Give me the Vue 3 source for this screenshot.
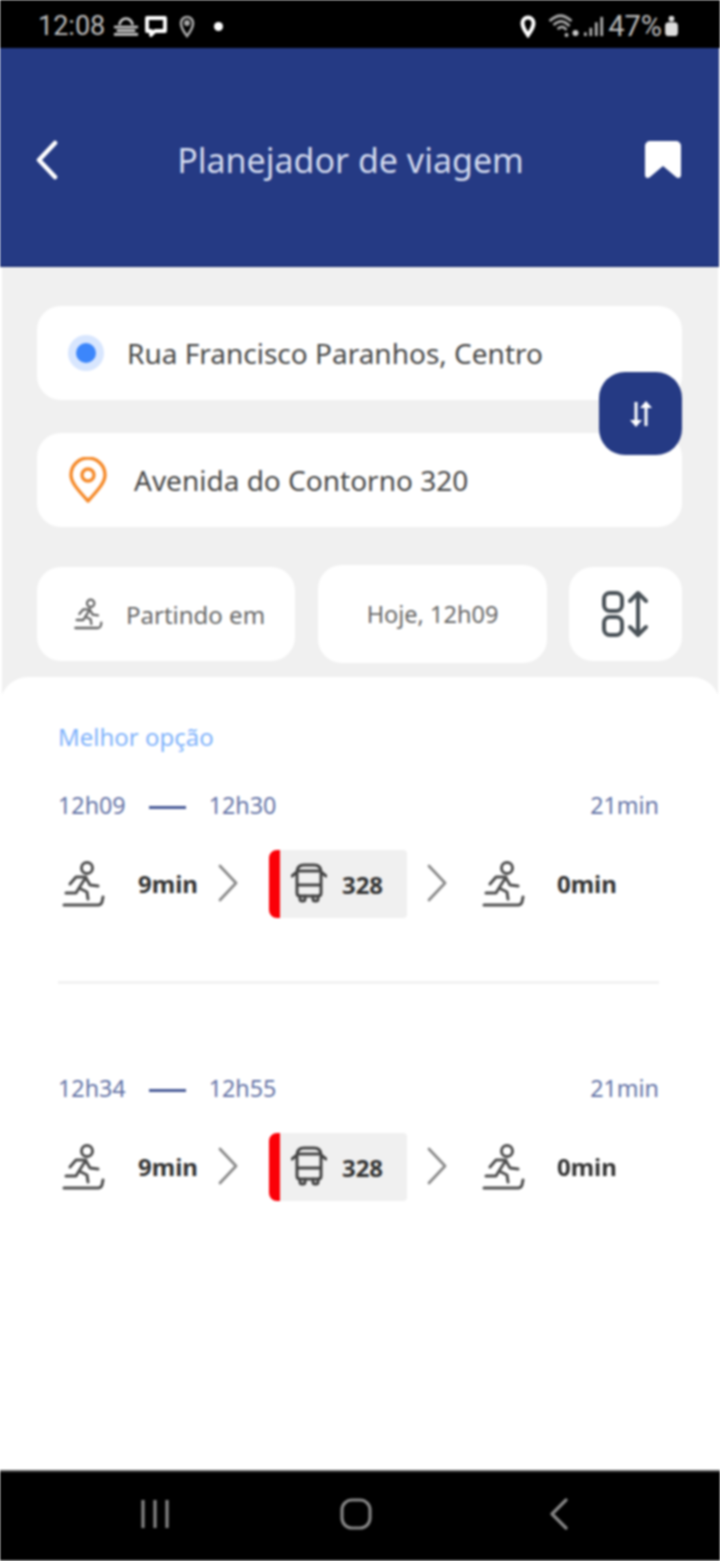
<template>
  <div class="app">
    <div class="status">
      <div class="status-side">
        <span class="clock">12:08</span>
        <svg class="st-weather" viewBox="0 0 28 20" fill="none" stroke="#c8c8c8" stroke-width="2.800">
          <path d="M7 9a7 7 0 0 1 14 0" /><path d="M1 11h26M4 15h20M1 19h26" />
        </svg>
        <svg class="st-chat" viewBox="0 0 24 22" fill="none" stroke="#fff" stroke-width="3.800" stroke-linejoin="round">
          <path d="M3 3h18v13H11l-4 4v-4H3z" />
        </svg>
        <svg class="st-pin" viewBox="0 0 16 24" fill="none" stroke="#aaa" stroke-width="2.600">
          <path d="M8 22C4 17 2 13 2 9a6 6 0 0 1 12 0c0 4-2 8-6 13z" /><circle cx="8" cy="9" r="1.600" />
        </svg>
        <span class="st-dot" />
      </div>
      <div class="status-side">
        <svg class="st-loc" viewBox="0 0 16 24" fill="none" stroke="#fff" stroke-width="4">
          <path d="M8 21C5 17 2.500 13 2.500 9a5.500 5.500 0 0 1 11 0c0 4-2.500 8-5.500 12z" />
        </svg>
        <svg class="st-wifi" viewBox="0 0 32 26" fill="none" stroke="#a8a8a8" stroke-width="2.800">
          <path d="M1 8c8-7 14-7 22 0M5 12c6-5 10-5 16 1M9 16c4-3 6-3 9 1" />
          <circle cx="18" cy="22" r="2" fill="#b8b8b8" stroke="none" /><circle cx="27" cy="20" r="3" fill="#c8c8c8" stroke="none" />
        </svg>
        <svg class="st-signal" viewBox="0 0 22 22" fill="#b0b0b0">
          <rect x="0" y="18" width="3" height="4" /><rect x="6" y="13" width="3" height="9" />
          <rect x="12" y="7" width="3" height="15" /><rect x="18" y="1" width="3" height="21" />
        </svg>
        <span class="battery-text">47%</span>
        <svg class="st-batt" viewBox="0 0 16 24" fill="#ddd">
          <rect x="5" y="1" width="6" height="6" rx="2" /><rect x="1" y="8" width="14" height="15" rx="4" />
        </svg>
      </div>
    </div>

    <header class="topbar">
      <svg class="back" viewBox="0 0 24 40" fill="none" stroke="#fff" stroke-width="4.500" stroke-linecap="round" stroke-linejoin="round">
        <path d="M20 3L4 20l16 17" />
      </svg>
      <h1 class="title">Planejador de viagem</h1>
      <svg class="bookmark" viewBox="0 0 36 38" fill="#fff">
        <path d="M5 0h26a5 5 0 0 1 5 5v29c0 3-3 4-5 2L18 25 5 36c-2 2-5 1-5-2V5a5 5 0 0 1 5-5z" />
      </svg>
    </header>

    <main class="panel">
      <div class="form">
        <div class="field">
          <span class="origin-dot" />
          <span class="field-text">Rua Francisco Paranhos, Centro</span>
        </div>
        <div class="field field-dest">
          <svg class="dest-pin" viewBox="0 0 38 46" fill="none" stroke="#f58a2a" stroke-width="3.400">
            <path d="M19 44C8 32 2 25 2 18a17 17 0 0 1 34 0c0 7-6 14-17 26z" stroke-linejoin="round" />
            <circle cx="19" cy="18" r="6" />
          </svg>
          <span class="field-text">Avenida do Contorno 320</span>
        </div>
        <button class="swap" type="button">
          <svg viewBox="0 0 26 28" width="26" height="28" fill="#fff" stroke="#fff" stroke-width="3">
            <path d="M8 2v20M18 26V6" />
            <path d="M2 20h12l-6 7zM12 8h12l-6-7z" stroke="none" />
          </svg>
        </button>
        <div class="options">
          <div class="opt opt-mode">
            <svg class="run run-small" viewBox="0 0 48 48" fill="none" stroke="#666" stroke-width="3.400" stroke-linecap="round" stroke-linejoin="round">
              <use href="#run-shape" />
            </svg>
            <span>Partindo em</span>
          </div>
          <div class="opt opt-time">Hoje, 12h09</div>
          <div class="opt opt-sort">
            <svg viewBox="0 0 48 48" width="48" height="48" fill="none" stroke="#4a5258" stroke-width="4" stroke-linecap="round" stroke-linejoin="round">
              <rect x="2" y="3" width="18" height="18" rx="6" />
              <rect x="2" y="27" width="18" height="18" rx="6" />
              <path d="M36 3v42M28 11l8-8 8 8M28 37l8 8 8-8" />
            </svg>
          </div>
        </div>
      </div>

      <section class="sheet">
        <svg class="defs" width="0" height="0">
          <defs>
            <g id="run-shape">
              <circle cx="25" cy="8" r="5.500" />
              <path d="M24 17L17 28l8 4 1 7M24 17H14l-6 7M24 18l4 7 8 1M17 28l-3 5H4" />
              <path d="M2 45h34q3 0 4-3l1-5" />
            </g>
          </defs>
        </svg>
        <p class="best">Melhor opção</p>
        <template v-for="(trip, i) in trips" :key="trip.start">
          <div class="trip">
            <div class="times">
              <span>{{ trip.start }}</span>
              <i class="dash" />
              <span>{{ trip.end }}</span>
              <span class="total">21min</span>
            </div>
            <div class="legs">
              <svg class="run" viewBox="0 0 48 48" fill="none" stroke="#505050" stroke-width="3" stroke-linecap="round" stroke-linejoin="round">
                <use href="#run-shape" />
              </svg>
              <b class="walk-time">9min</b>
              <svg class="chev chev-a" viewBox="0 0 20 38" fill="none" stroke="#8a8a8a" stroke-width="2.800" stroke-linecap="round" stroke-linejoin="round">
                <path d="M2 2l16 17L2 36" />
              </svg>
              <div class="line-tag">
                <svg class="bus" viewBox="0 0 36 40" fill="none" stroke="#444" stroke-width="3" stroke-linecap="round" stroke-linejoin="round">
                  <path d="M6 30V9q0-7 7-7h10q7 0 7 7v21q0 3-3 3H9q-3 0-3-3zM6 8h24M6 22h24M1 13l5-4M35 13l-5-4" />
                  <path d="M9 33v3q0 2 2 2h1q2 0 2-2v-3M22 33v3q0 2 2 2h1q2 0 2-2v-3" />
                </svg>
                <b>328</b>
              </div>
              <svg class="chev chev-b" viewBox="0 0 20 38" fill="none" stroke="#8a8a8a" stroke-width="2.800" stroke-linecap="round" stroke-linejoin="round">
                <path d="M2 2l16 17L2 36" />
              </svg>
              <svg class="run run-end" viewBox="0 0 48 48" fill="none" stroke="#505050" stroke-width="3" stroke-linecap="round" stroke-linejoin="round">
                <use href="#run-shape" />
              </svg>
              <b class="walk-time walk-end">0min</b>
            </div>
          </div>
          <hr v-if="i === 0" class="sep" />
        </template>
      </section>
    </main>

    <nav class="navbar">
      <svg viewBox="0 0 30 30" width="30" height="30" fill="none" stroke="#858585" stroke-width="3.200">
        <path d="M3 1v28M15 1v28M27 1v28" />
      </svg>
      <svg class="nav-home" viewBox="0 0 32 32" width="32" height="32" fill="none" stroke="#858585" stroke-width="3.200">
        <rect x="2" y="2" width="28" height="28" rx="10" />
      </svg>
      <svg class="nav-back" viewBox="0 0 20 32" width="20" height="32" fill="none" stroke="#858585" stroke-width="3.200" stroke-linecap="round" stroke-linejoin="round">
        <path d="M17 2L3 16l14 14" />
      </svg>
    </nav>
  </div>
</template>

<script setup>
const trips = [
  { start: '12h09', end: '12h30' },
  { start: '12h34', end: '12h55' },
]
</script>

<style>
html,
body {
  margin: 0;
  background: #fff;
}
</style>

<style scoped>
.app {
  width: 720px;
  height: 1561px;
  display: flex;
  flex-direction: column;
  overflow: hidden;
  font-family: "Noto Sans", "Liberation Sans", sans-serif;
  filter: blur(1px);
}

.status {
  flex: 0 0 48px;
  box-sizing: border-box;
  background: #000;
  display: flex;
  justify-content: space-between;
  align-items: center;
  padding: 4px 41px 0 38px;
  color: #bdbdbd;
  font-family: Roboto, sans-serif;
  font-size: 27px;
}

.status-side {
  display: flex;
  align-items: center;
}

.st-weather { width: 26px; height: 20px; margin-left: 8px; }
.st-chat { width: 24px; height: 22px; margin-left: 5px; }
.st-pin { width: 16px; height: 24px; margin-left: 11px; }
.st-dot { width: 9px; height: 9px; border-radius: 50%; background: #fff; margin-left: 19px; }
.st-loc { width: 16px; height: 24px; }
.st-wifi { width: 35px; height: 26px; margin-left: 11px; }
.st-signal { width: 20px; height: 22px; margin-left: 2px; }
.battery-text { margin-left: 4px; font-size: 29px; }
.st-batt { width: 15px; height: 22px; margin-left: 2px; }

.topbar {
  flex: 0 0 219px;
  box-sizing: border-box;
  margin-right: 1px;
  background: #253a84;
  border-bottom: 2px solid #1f3278;
  display: flex;
  align-items: center;
  padding: 6px 38px 0 35px;
}

.back { width: 24px; height: 40px; }
.bookmark { width: 36px; height: 38px; }

.title {
  flex: 1;
  margin: 0 0 0 -3px;
  text-align: center;
  font-size: 34px;
  font-weight: 400;
  color: #d3daee;
}

.panel {
  flex: 1;
  display: flex;
  flex-direction: column;
  background: #f0f0f0;
  margin: 0 2px;
}

.form {
  position: relative;
  padding: 39px 36px 0 35px;
}

.field {
  height: 94px;
  display: flex;
  align-items: center;
  background: #fff;
  border-radius: 24px;
  padding-left: 39px;
  margin-bottom: 33px;
}

.field-dest {
  padding-left: 32px;
  margin-bottom: 38px;
}

.field-text {
  font-size: 28px;
  color: #484848;
}

.origin-dot {
  width: 20px;
  height: 20px;
  margin-right: 31px;
  border-radius: 50%;
  background: #3c86fb;
  box-shadow: 0 0 0 8px #d8e6fe;
}

.dest-pin {
  width: 38px;
  height: 46px;
  margin-right: 27px;
}

.swap {
  position: absolute;
  top: 105px;
  right: 36px;
  width: 83px;
  height: 83px;
  padding: 0;
  border: 0;
  border-radius: 26px;
  background: #253a84;
  display: flex;
  align-items: center;
  justify-content: center;
}

.options {
  display: flex;
  align-items: center;
}

.opt {
  height: 94px;
  display: flex;
  align-items: center;
  justify-content: center;
  background: #fff;
  border-radius: 24px;
  font-size: 24px;
  color: #666;
}

.opt-mode {
  width: 258px;
  box-sizing: border-box;
  justify-content: flex-start;
  padding-left: 37px;
}

.opt-time {
  width: 229px;
  height: 98px;
  margin-left: 23px;
  font-size: 23.500px;
}

.opt-sort {
  width: 113px;
  margin-left: 22px;
}

.run {
  width: 48px;
  height: 48px;
  flex: none;
}

.run-small {
  width: 32px;
  height: 32px;
  margin-right: 20px;
}

.sheet {
  flex: 1;
  margin: 14px -2px 0;
  padding: 47px 61px 0 58px;
  background: #fff;
  border-radius: 28px 28px 0 0;
}

.defs {
  position: absolute;
}

.best {
  margin: 0 0 40px;
  font-size: 24px;
  line-height: 26px;
  color: #7fb2fb;
}

.times {
  display: flex;
  align-items: center;
  font-size: 23.300px;
  line-height: 30px;
  color: #6473a6;
}

.dash {
  width: 37px;
  height: 3px;
  margin: 4px 23px 0;
  background: #4a5c98;
}

.total {
  margin-left: auto;
}

.legs {
  display: flex;
  align-items: center;
  height: 68px;
  margin-top: 29px;
  font-size: 24px;
  color: #333;
}

.legs b {
  font-weight: 700;
}

.legs .run {
  margin-left: 4px;
  margin-top: 2px;
}

.walk-time {
  margin-left: 28px;
}

.chev {
  width: 20px;
  height: 38px;
  flex: none;
}

.chev-a { margin-left: 20px; }
.chev-b { margin-left: 20px; }

.line-tag {
  width: 138px;
  height: 68px;
  box-sizing: border-box;
  display: flex;
  align-items: center;
  margin: 2px 0 0 31px;
  padding-left: 11px;
  background: #f0f0f0;
  border-left: 11px solid #fb0007;
  border-radius: 8px 4px 4px 8px;
}

.bus {
  width: 36px;
  height: 40px;
  margin: 0 15px 3px 0;
}

.legs .run-end {
  margin-left: 35px;
}

.walk-end {
  margin-left: 27px;
}

.sep {
  height: 3px;
  margin: 64px 0 89px;
  border: 0;
  background: #f2f2f2;
}

.navbar {
  flex: 0 0 91px;
  box-sizing: border-box;
  display: flex;
  align-items: center;
  background: #000;
  border-top: 2px solid #555;
  border-bottom: 1px solid #666;
  padding: 0 0 4px 140px;
}

.nav-home { margin-left: 170px; }
.nav-back { margin-left: 177px; }
</style>
